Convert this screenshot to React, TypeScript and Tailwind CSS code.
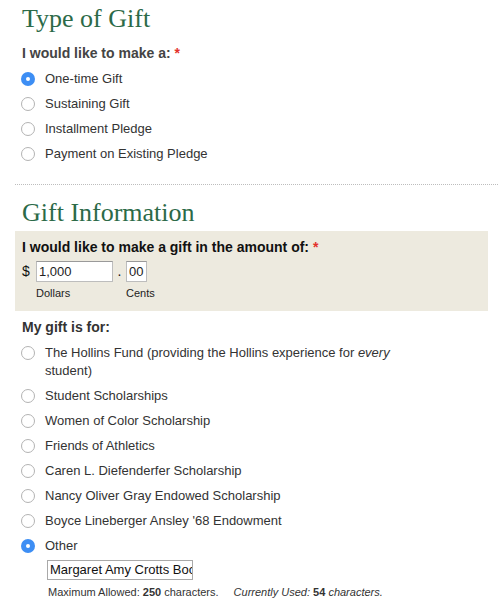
import { FC, ReactNode } from "react";

interface RadioRowProps {
  checked?: boolean;
  children: ReactNode;
}

const RadioRow: FC<RadioRowProps> = ({ checked = false, children }) => {
  return (
    <label className="flex items-start py-[3.5px] leading-[18px]">
      {/* native look radio circle */}
      <span className="mt-[2px] flex h-[14px] w-[14px] shrink-0 items-center justify-center">
        {checked ? (
          <span className="flex h-[14px] w-[14px] items-center justify-center rounded-full bg-[#3d8ef4]">
            <span className="h-[4px] w-[4px] rounded-full bg-white" />
          </span>
        ) : (
          <span className="h-[14px] w-[14px] rounded-full border border-[#b3b3b3] bg-white" />
        )}
      </span>
      <span className="ml-[10px] text-[13px] text-[#333]">{children}</span>
    </label>
  );
};

const SectionTitle: FC<{ children: ReactNode; className?: string }> = ({
  children,
  className = "",
}) => (
  <h2
    className={`ml-[7px] h-[32px] font-['Liberation_Serif',Georgia,serif] text-[26px] leading-[32px] text-[#2c6a48] ${className}`}
  >
    {children}
  </h2>
);

const giftTypes = [
  { label: "One-time Gift", checked: true },
  { label: "Sustaining Gift" },
  { label: "Installment Pledge" },
  { label: "Payment on Existing Pledge" },
];

const funds = [
  "Student Scholarships",
  "Women of Color Scholarship",
  "Friends of Athletics",
  "Caren L. Diefenderfer Scholarship",
  "Nancy Oliver Gray Endowed Scholarship",
  "Boyce Lineberger Ansley '68 Endowment",
];

export default function App() {
  return (
    <div className="min-h-[613px] w-[500px] bg-white pl-[15px] font-['Liberation_Sans',Arial,sans-serif] text-[#333]">
      {/* Type of Gift */}
      <section>
        <SectionTitle className="pt-[3px] h-[35px]">Type of Gift</SectionTitle>
        <div className="ml-[7px] mt-[9px] h-[19px] text-[14px] font-bold leading-[18px] text-[#444]">
          I would like to make a: <span className="text-[#e3312b]">*</span>
        </div>
        <div className="ml-[6px] mt-[3px]">
          {giftTypes.map((g) => (
            <RadioRow key={g.label} checked={g.checked}>
              {g.label}
            </RadioRow>
          ))}
        </div>
      </section>

      <div className="mt-[18px] w-[483px] border-t border-dotted border-[#bdbdbd]" />

      {/* Gift Information */}
      <section>
        <SectionTitle className="mt-[12px]">Gift Information</SectionTitle>

        <div className="mt-[2px] w-[473px] bg-[#edeadf] px-[7px] pb-[11px] pt-[7px]">
          <div className="h-[18px] text-[14px] font-bold leading-[18px] text-[#111]">
            I would like to make a gift in the amount of:{" "}
            <span className="text-[#e3312b]">*</span>
          </div>
          <div className="mt-[5px] flex h-[21px] items-center text-[14px] text-[#111]">
            <span className="w-[14px]">$</span>
            <div className="flex h-[21px] w-[77px] items-center border border-[#bdbdbd] border-t-[#9a9a9a] bg-white px-[2px] text-[13px] text-[#222]">
              1,000
            </div>
            <span className="w-[13px] text-center">.</span>
            <div className="flex h-[21px] w-[21px] items-center border border-[#bdbdbd] border-t-[#9a9a9a] bg-white px-[2px] text-[13px] text-[#222]">
              00
            </div>
          </div>
          <div className="mt-[4px] flex h-[14px] text-[11px] leading-[14px] text-[#222]">
            <span className="ml-[14px] w-[90px]">Dollars</span>
            <span>Cents</span>
          </div>
        </div>

        <div className="ml-[7px] mt-[7px] h-[18px] text-[14px] font-bold leading-[18px] text-[#333]">
          My gift is for:
        </div>

        <div className="ml-[6px] mt-[4px]">
          <RadioRow>
            The Hollins Fund (providing the Hollins experience for{" "}
            <em>every</em>
            <br />
            student)
          </RadioRow>
          {funds.map((f) => (
            <RadioRow key={f}>{f}</RadioRow>
          ))}
          <RadioRow checked>Other</RadioRow>
        </div>

        <div className="ml-[32px] mt-[2px] flex h-[20px] w-[146px] items-center overflow-hidden whitespace-nowrap border border-[#a9a9a9] bg-white px-[2px] text-[13px] text-[#111]">
          Margaret Amy Crotts Boc
        </div>
        <div className="ml-[33px] mt-[5px] h-[14px] text-[11px] leading-[14px] text-[#333]">
          Maximum Allowed: <b>250</b> characters.
          <span className="ml-[15px] italic">
            Currently Used: <b className="not-italic">54</b> characters.
          </span>
        </div>
      </section>
    </div>
  );
}
